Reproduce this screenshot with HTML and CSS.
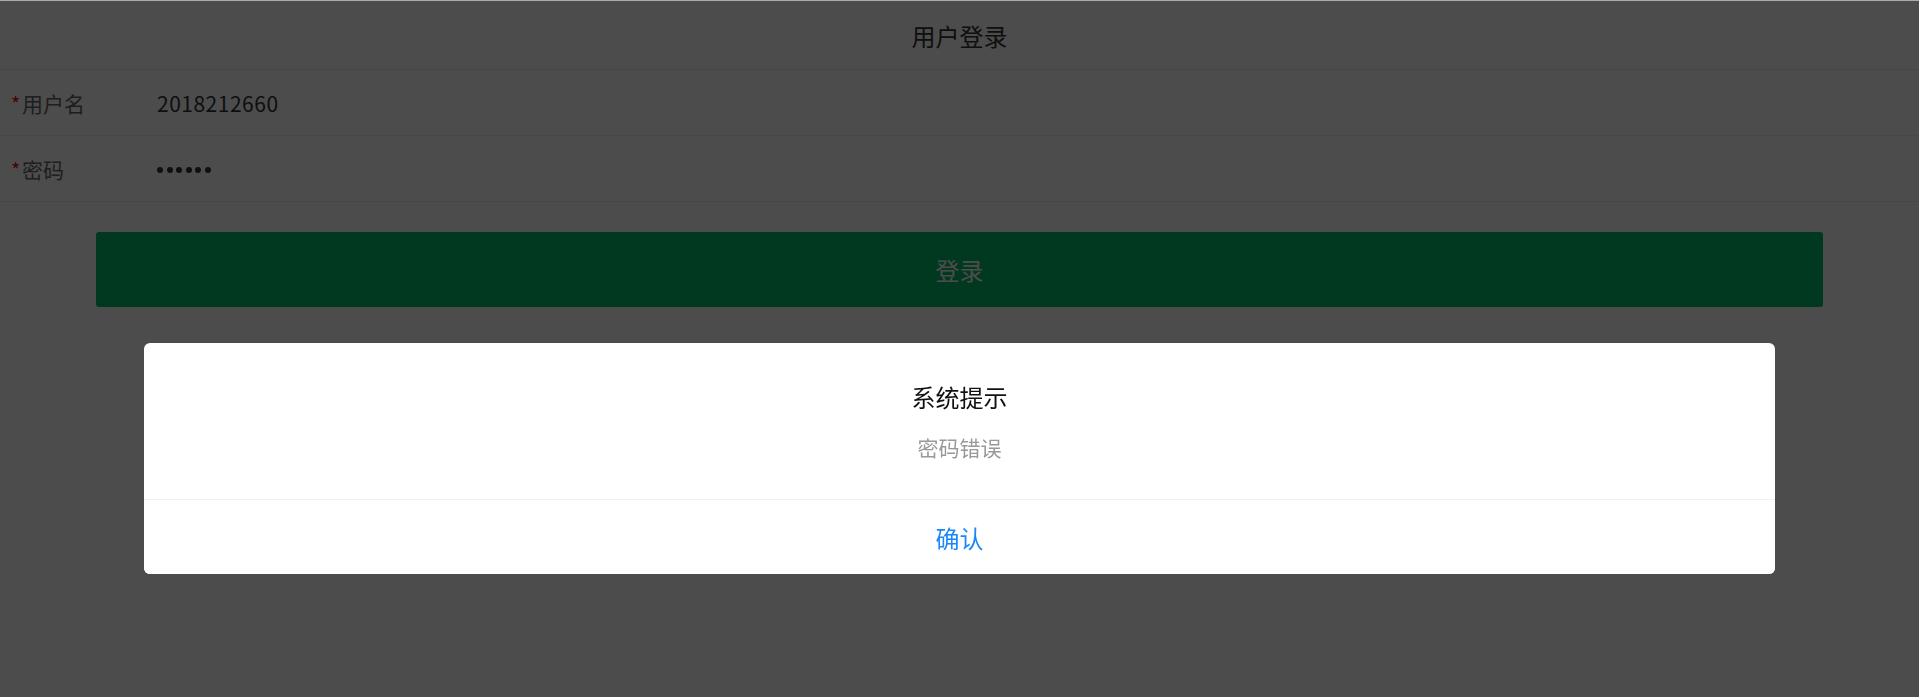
FILE: index.html
```html
<!DOCTYPE html>
<html lang="zh-CN">
<head>
    <meta charset="UTF-8">
    <meta name="viewport" content="width=device-width, initial-scale=1.0">
    <title>用户登录</title>
    <link rel="stylesheet" href="styles.css">
</head>
<body>
    <div class="nav-bar">
        <span class="nav-title">用户登录</span>
    </div>

    <div class="cell-group">
        <div class="field-row">
            <span class="star">*</span>
            <span class="field-label">用户名</span>
            <span class="field-value">2018212660</span>
        </div>
        <div class="field-row last-row">
            <span class="star">*</span>
            <span class="field-label">密码</span>
            <span class="field-value dots">
                <i></i><i></i><i></i><i></i><i></i><i></i>
            </span>
        </div>
    </div>

    <div class="btn-wrap">
        <button class="login-btn">登录</button>
    </div>

    <!-- dialog -->
    <div class="overlay">
        <div class="dialog">
            <div class="dialog-title">系统提示</div>
            <div class="dialog-msg">密码错误</div>
            <div class="dialog-footer">
                <button class="confirm-btn">确认</button>
            </div>
        </div>
    </div>
</body>
</html>
```

FILE: styles.css
```css
body {
    margin: 0;
    border-top: 1px solid #aaaaaa;
    background-color: #ffffff;
    font-family: "Noto Sans CJK SC", "Noto Sans", sans-serif;
    color: #323233;
}
.nav-bar {
    height: 68px;
    display: flex;
    justify-content: center;
    align-items: center;
    border-bottom: 1px solid #e6e6e6;
}
.nav-title {
    font-size: 24px;
    color: #323233;
}
.cell-group {
    border-bottom: 1px solid #ebedf0;
}
.field-row {
    display: flex;
    align-items: center;
    height: 65px;
    padding-left: 11px;
    font-size: 21px;
    border-bottom: 1px solid #ebedf0;
}
.last-row {
    border-bottom: none;
}
.star {
    width: 11px;
    color: #ee0a24;
    font-size: 20px;
    margin-top: 1px;
}
.field-label {
    width: 135px;
    color: #646566;
}
.field-value {
    color: #323233;
    letter-spacing: 0.5px;
}
.dots {
    display: flex;
    gap: 3.6px;
    margin-top: 2px;
}
.dots i {
    display: block;
    width: 6px;
    height: 6px;
    border-radius: 50%;
    background-color: #323233;
}
.btn-wrap {
    display: flex;
    justify-content: center;
    padding-top: 30px;
}
.login-btn {
    width: 90%;
    height: 75px;
    border: none;
    border-radius: 3px;
    background-color: #03bb6b;
    color: #ffffff;
    font-family: inherit;
    font-size: 24px;
}
.overlay {
    position: fixed;
    top: 1px;
    left: 0;
    right: 0;
    bottom: 0;
    background-color: rgba(0, 0, 0, 0.7);
    display: flex;
    flex-direction: column;
    align-items: center;
    padding-top: 342px;
}
.dialog {
    width: 85%;
    background-color: #ffffff;
    border-radius: 6px;
    overflow: hidden;
}
.dialog-title {
    padding-top: 36px;
    line-height: 36px;
    font-size: 24px;
    text-align: center;
    color: #111111;
}
.dialog-msg {
    padding: 17px 30px 37px;
    line-height: 30px;
    font-size: 21px;
    text-align: center;
    color: #999999;
}
.dialog-footer {
    border-top: 1px solid #f0f0f0;
}
.confirm-btn {
    display: block;
    width: 100%;
    height: 74px;
    border: none;
    background-color: #ffffff;
    color: #1989fa;
    font-family: inherit;
    font-size: 24px;
}
```
